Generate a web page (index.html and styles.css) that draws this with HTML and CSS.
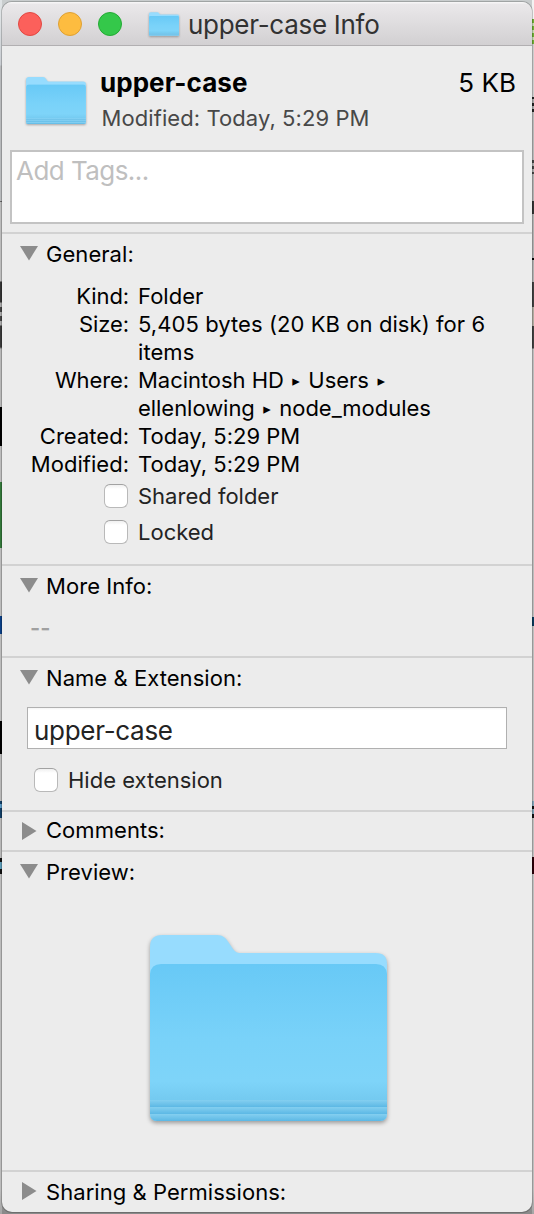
FILE: index.html
```html
<!DOCTYPE html>
<html lang="en">
<head>
<meta charset="utf-8">
<title>upper-case Info</title>
<link rel="stylesheet" href="styles.css">
</head>
<body>
<svg class="defs" width="0" height="0" aria-hidden="true">
  <defs>
    <linearGradient id="front" x1="0" y1="0" x2="0" y2="1">
      <stop offset="0" stop-color="#68c9f6"/>
      <stop offset=".55" stop-color="#79d2f9"/>
      <stop offset=".86" stop-color="#7ed4f9"/>
      <stop offset="1" stop-color="#74caf0"/>
    </linearGradient>
    <linearGradient id="band" x1="0" y1="0" x2="0" y2="1">
      <stop offset="0" stop-color="#84cff0"/>
      <stop offset="1" stop-color="#5cb8e5"/>
    </linearGradient>
    <clipPath id="front-shape">
      <path d="M0 39Q1 29 11 29H226Q236 29 237 39V179Q237 186 230 186H7Q0 186 0 179Z"/>
    </clipPath>
    <symbol id="folder" viewBox="0 0 237 186">
      <path fill="#97dcfe" d="M0 12Q0 0 12 0H67C73 0 76 3 79 8L83 14C86 18 88 18 92 18H226Q237 18 237 29V179Q237 186 230 186H7Q0 186 0 179Z"/>
      <g clip-path="url(#front-shape)">
        <rect y="29" width="237" height="136" fill="url(#front)"/>
        <rect y="165" width="237" height="7" fill="url(#band)"/>
        <rect y="172" width="237" height="7" fill="url(#band)"/>
        <rect y="179" width="237" height="7" fill="url(#band)"/>
      </g>
    </symbol>
  </defs>
</svg>
<div class="edge edge-left"></div>
<main class="window">
  <header class="titlebar">
    <div class="lights"><i class="light red"></i><i class="light yellow"></i><i class="light green"></i></div>
    <svg class="title-icon"><use href="#folder"/></svg>
    <h1 class="title">upper-case Info</h1>
  </header>
  <div class="summary">
    <svg class="summary-icon"><use href="#folder"/></svg>
    <div class="summary-text">
      <div class="summary-row"><strong>upper-case</strong><span class="size">5 KB</span></div>
      <div class="modified">Modified: Today, 5:29 PM</div>
    </div>
  </div>
  <div class="tags">Add Tags...</div>
  <section class="section general">
    <h2 class="heading"><svg class="tri" viewBox="0 0 18 18"><path d="M0 2H18L9 16.5Z"/></svg>General:</h2>
    <dl class="facts">
      <dt class="kind">Kind:</dt><dd>Folder</dd>
      <dt class="kind">Size:</dt><dd class="bytes">5,405 bytes (20 KB on disk) for 6 items</dd>
      <dt class="kind">Where:</dt><dd class="path">Macintosh HD<span class="arrow">▸</span>Users<span class="arrow">▸</span><br>ellenlowing<span class="arrow">▸</span>node_modules</dd>
      <dt>Created:</dt><dd>Today, 5:29 PM</dd>
      <dt>Modified:</dt><dd>Today, 5:29 PM</dd>
    </dl>
    <div class="checks">
      <label class="check"><span class="box"></span>Shared folder</label>
      <label class="check"><span class="box"></span>Locked</label>
    </div>
  </section>
  <section class="section more">
    <h2 class="heading"><svg class="tri" viewBox="0 0 18 18"><path d="M0 2H18L9 16.5Z"/></svg>More Info:</h2>
    <p class="none">--</p>
  </section>
  <section class="section name">
    <h2 class="heading"><svg class="tri" viewBox="0 0 18 18"><path d="M0 2H18L9 16.5Z"/></svg>Name &amp; Extension:</h2>
    <div class="field">upper-case</div>
    <label class="check hide"><span class="box"></span>Hide extension</label>
  </section>
  <section class="section comments">
    <h2 class="heading"><svg class="tri" viewBox="0 0 18 18"><path d="M2 0V18L16.5 9Z"/></svg>Comments:</h2>
  </section>
  <section class="section preview">
    <h2 class="heading"><svg class="tri" viewBox="0 0 18 18"><path d="M0 2H18L9 16.5Z"/></svg>Preview:</h2>
    <svg class="preview-icon"><use href="#folder"/></svg>
  </section>
  <section class="section sharing">
    <h2 class="heading"><svg class="tri" viewBox="0 0 18 18"><path d="M2 0V18L16.5 9Z"/></svg>Sharing &amp; Permissions:</h2>
  </section>
</main>
<div class="edge edge-right"></div>
</body>
</html>
```
FILE: styles.css
```css
* { box-sizing: border-box; margin: 0; padding: 0; }

body {
  display: grid;
  grid-template-columns: 2px 530px 2px;
  height: 1214px;
  overflow: hidden;
  font: 22px/28px Inter, "Liberation Sans", sans-serif;
  color: #000;
  background: linear-gradient(#c9cdce 0 20px, #999 40px 1200px, #8a8a8a 1212px);
}

.defs { position: absolute; }

/* slivers of the desktop behind the window */
.edge-left {
  background: linear-gradient(#dfe3e5 0 16px, #c9cdd2 65px, #b8babc 66px 201px, #666 201px 202px,
    #bcbcbc 202px 281px, #343434 282px 302px, #aaa 303px 307px, #444 307px 312px, #aaa 312px 316px,
    #444 316px 321px, #aaa 321px 325px, #3a3a3a 326px 347px, #b8b8b8 349px 407px, #000 407px 446px,
    #bcbcbc 446px 482px, #33783a 482px 548px, #bcbcbc 548px 616px, #0a3f86 616px 634px,
    #bcbcbc 634px 721px, #000 721px 754px, #b8b8b8 754px 801px, #123f66 801px 804px, #5c9cc8 804px 808px,
    #123f66 808px 818px, #b8b8b8 818px 858px, #111 858px 862px, #5c9cb8 862px 869px, #111 869px 874px,
    #bcbcbc 874px 1190px, #a5a5a5 1214px);
}
.edge-right {
  background: linear-gradient(#f2f2f2 0 19px, #6fae35 19px 23px, #c5dcb0 23px 26px, #6fae35 26px 30px,
    #c5dcb0 30px 33px, #6fae35 33px 37px, #c5dcb0 37px 40px, #6fae35 40px 44px, #ccc 44px 97px,
    #222 97px 99px, #aaa 99px 103px, #222 103px 106px, #aaa 106px 109px, #222 109px 112px,
    #b8b8b8 112px 160px, #444 160px 163px, #aaa 163px 166px, #444 166px 169px, #aaa 169px 172px,
    #444 172px 174px, #b0b0b0 174px 201px, #333 201px 214px, #b0b0b0 214px 258px, #000 258px 260px,
    #b0b0b0 260px 282px, #404040 282px 307px, #b0aaa0 307px 326px, #404040 326px 348px,
    #bcbcbc 349px 617px, #083a5c 617px 626px, #bebebe 626px 801px, #7fa4b8 801px 806px,
    #111 806px 809px, #7fa4b8 809px 814px, #111 814px 818px, #bebebe 818px 857px,
    #2b0008 857px 874px, #bebebe 874px 1190px, #a5a5a5 1214px);
}

.window {
  display: flex;
  flex-direction: column;
  height: 1210px;
  margin-top: 2px;
  overflow: hidden;
  position: relative;
  border-radius: 10px;
  background: #ececec;
  box-shadow: 0 0 0 1px rgba(0, 0, 0, .2);
}

.titlebar {
  display: flex;
  align-items: center;
  height: 44px;
  padding: 1px 0 0 16px;
  border-bottom: 1px solid #b1afb1;
  background: linear-gradient(#f6f5f6 0 1px, #eae8ea 2px, #d2d0d2);
}
.lights { display: flex; gap: 16px; margin-right: 27px; }
.light { width: 24px; height: 24px; border: 1px solid; border-radius: 50%; }
.red { background: #fc605b; border-color: #e14842; }
.yellow { background: #fdbc40; border-color: #dea033; }
.green { background: #34c84a; border-color: #24aa34; }
.title-icon { width: 30px; height: 24px; margin-right: 9px; filter: drop-shadow(0 1px 1px rgba(0, 0, 0, .3)); }
.title { font-size: 26px; font-weight: 400; letter-spacing: -.29px; color: #323232; padding-top: 2px; }

.summary { display: flex; height: 103px; padding: 31px 16px 0 24px; }
.summary-icon { width: 60px; height: 47px; margin-right: 14px; filter: drop-shadow(0 1px 1px rgba(0, 0, 0, .3)); }
.summary-text { flex: 1; margin-top: -8px; }
.summary-row { display: flex; justify-content: space-between; font-size: 26px; line-height: 28px; letter-spacing: .05px; }
.modified { margin: 7px 0 0 1.5px; letter-spacing: .08px; color: #484848; }

.tags {
  height: 74px;
  margin: 1px 8px 8px;
  padding: 5px 4px;
  border: 2px solid #c3c3c3;
  background: #fff;
  font-size: 26px;
  letter-spacing: -.55px;
  color: #bfbfbf;
}

.section { border-top: 2px solid #d2d2d2; padding-top: 6px; }
.general { height: 332px; }
.more { height: 92px; }
.name { height: 154px; }
.comments { height: 40px; padding-top: 4px; }
.preview { height: 320px; }
.sharing { height: 42px; }

.heading { display: flex; align-items: center; font-size: 22px; font-weight: 400; padding-left: 18px; letter-spacing: .05px; }
.tri { width: 18px; height: 18px; margin: 0 8px 2px 0; fill: #8c8c8c; }
.comments .tri { margin: 2px 8px 0 0; }

.facts { display: grid; grid-template-columns: 127px 380px; column-gap: 9px; margin-top: 14px; letter-spacing: .02px; }
.facts dt { text-align: right; }
.facts .kind { letter-spacing: -.1px; }
.facts .bytes { letter-spacing: .07px; }
.facts .path { letter-spacing: -.04px; }
.arrow { display: inline-block; width: 24.5px; text-align: center; vertical-align: 2px; font: 15px/18px "DejaVu Sans", sans-serif; }

.checks { display: grid; row-gap: 8px; padding: 4px 0 0 102px; }
.check { display: flex; align-items: center; gap: 10px; color: #232323; }
.box {
  width: 24px;
  height: 24px;
  border: 1px solid #b9b9b9;
  border-top-color: #a2a2a2;
  border-radius: 6px;
  background: linear-gradient(#f0f0f0, #fff 4px);
}

.none { padding: 14px 0 0 28px; font-weight: 600; color: #a0a0a0; }
.field {
  width: 480px;
  height: 42px;
  margin: 15px 0 17px 25px;
  padding: 9px 6px;
  border: 1px solid #b0b0b0;
  background: linear-gradient(#f4f4f4, #fff 2px);
  font-size: 26px;
  line-height: 28px;
  letter-spacing: -.3px;
  color: #232323;
}
.hide { padding-left: 32px; }

.preview-icon {
  display: block;
  width: 237px;
  height: 186px;
  margin: 49px 0 0 148px;
  filter: drop-shadow(0 2px 2px rgba(0, 0, 0, .35));
}
```
